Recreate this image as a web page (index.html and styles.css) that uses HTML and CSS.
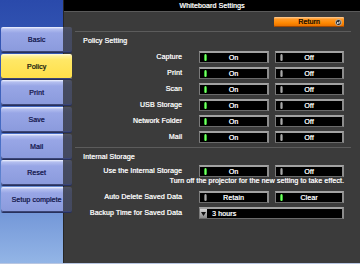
FILE: index.html
```html
<!DOCTYPE html>
<html lang="en">
<head>
    <meta charset="UTF-8">
    <title>Whiteboard Settings</title>
    <link rel="stylesheet" href="styles.css">
</head>
<body>
    <div class="screen">
        <nav class="tabs">
            <button class="tab">Basic</button>
            <button class="tab active">Policy</button>
            <button class="tab">Print</button>
            <button class="tab">Save</button>
            <button class="tab">Mail</button>
            <button class="tab">Reset</button>
            <button class="tab">Setup complete</button>
        </nav>

        <main class="panel">
            <header class="titlebar">Whiteboard Settings</header>

            <div class="toolbar">
                <button class="return-btn">
                    <span class="return-text">Return</span>
                    <svg class="return-icon" width="7" height="7" viewBox="0 0 7 7">
                        <circle cx="3.5" cy="3.5" r="3" fill="#2a2a2a" stroke="#cfcfcf" stroke-width="0.8"/>
                        <path d="M4.8 2.2 V4 H2.2 M3.2 3 L2.2 4 L3.2 5" fill="none" stroke="#fff" stroke-width="0.8"/>
                    </svg>
                </button>
            </div>

            <hr class="sep">
            <h2 class="group-title">Policy Setting</h2>
            <div class="rows">
                <div class="row">
                    <span class="label">Capture</span>
                    <span class="toggle"><i class="led on"></i><span>On</span></span>
                    <span class="toggle"><i class="led"></i><span>Off</span></span>
                </div>
                <div class="row">
                    <span class="label">Print</span>
                    <span class="toggle"><i class="led on"></i><span>On</span></span>
                    <span class="toggle"><i class="led"></i><span>Off</span></span>
                </div>
                <div class="row">
                    <span class="label">Scan</span>
                    <span class="toggle"><i class="led on"></i><span>On</span></span>
                    <span class="toggle"><i class="led"></i><span>Off</span></span>
                </div>
                <div class="row">
                    <span class="label">USB Storage</span>
                    <span class="toggle"><i class="led on"></i><span>On</span></span>
                    <span class="toggle"><i class="led"></i><span>Off</span></span>
                </div>
                <div class="row">
                    <span class="label">Network Folder</span>
                    <span class="toggle"><i class="led on"></i><span>On</span></span>
                    <span class="toggle"><i class="led"></i><span>Off</span></span>
                </div>
                <div class="row">
                    <span class="label">Mail</span>
                    <span class="toggle"><i class="led on"></i><span>On</span></span>
                    <span class="toggle"><i class="led"></i><span>Off</span></span>
                </div>
            </div>

            <hr class="sep">
            <h2 class="group-title">Internal Storage</h2>
            <div class="row first">
                <span class="label">Use the Internal Storage</span>
                <span class="toggle"><i class="led on"></i><span>On</span></span>
                <span class="toggle"><i class="led"></i><span>Off</span></span>
            </div>
            <p class="note">Turn off the projector for the new setting to take effect.</p>
            <div class="rows storage">
                <div class="row">
                    <span class="label">Auto Delete Saved Data</span>
                    <span class="toggle"><i class="led"></i><span>Retain</span></span>
                    <span class="toggle"><i class="led on"></i><span>Clear</span></span>
                </div>
                <div class="row">
                    <span class="label">Backup Time for Saved Data</span>
                    <span class="select">
                        <span class="select-arrow">
                            <svg width="5" height="4" viewBox="0 0 5 4"><path d="M0 0 H5 L2.5 4 Z" fill="#111"/></svg>
                        </span>
                        <span class="select-value">3 hours</span>
                    </span>
                </div>
            </div>
        </main>
    </div>
</body>
</html>
```

FILE: styles.css
```css
* {
    box-sizing: border-box;
}

body {
    margin: 0;
    width: 360px;
    height: 264px;
    overflow: hidden;
    font-family: "Liberation Sans", Arial, sans-serif;
    font-size: 7px;
    letter-spacing: 0.12px;
}

.screen {
    display: flex;
    height: 264px;
    background: linear-gradient(#2a4aab, #4a70c6 55%, #93b5e6);
    border-bottom: 1px solid #b8c6e2;
}

/* left menu */
.tabs {
    width: 63px;
    flex: none;
    display: flex;
    flex-direction: column;
    gap: 1.67px;
    padding: 27px 0 0 1px;
}

.tab {
    position: relative;
    z-index: 1;
    width: 71px;
    height: 25px;
    flex: none;
    border: 0;
    border-radius: 2px;
    padding: 0;
    font: 7px "Liberation Sans", Arial, sans-serif;
    letter-spacing: 0.1px;
    text-shadow: 0.35px 0 0 #1b2255;
    color: #1b2255;
    text-align: center;
    background:
        linear-gradient(to right, transparent 62px, rgba(58, 62, 78, 0.88) 62px),
        linear-gradient(#f4f6ff, #b4bff0 2px, #98a6e6 6px, #8a9adc);
    box-shadow: inset 0 -1px 0 #3c4676, 0 1px 0 #27305c;
}

.tab.active {
    background: linear-gradient(#fffbe0, #fff09a 2px, #ffe866 6px, #ffdf48);
    color: #2b2a14;
    text-shadow: 0.35px 0 0 #2b2a14;
}

/* right panel */
.panel {
    flex: 1;
    display: flex;
    flex-direction: column;
    background: #3b3b3b;
    border-left: 1px solid #262626;
    color: #f2f2f2;
    text-shadow: 0.35px 0 0 #f2f2f2;
}

.titlebar {
    height: 12px;
    line-height: 11px;
    background: #000;
    border-bottom: 1px solid #5a5a5a;
    text-align: center;
}

.toolbar {
    display: flex;
    justify-content: flex-end;
    padding: 5px 16px 0 0;
}

.return-btn {
    width: 70px;
    height: 10px;
    display: grid;
    grid-template-columns: 9px 1fr 9px;
    align-items: center;
    padding: 0;
    border: 0;
    border-radius: 1px;
    background: linear-gradient(#ffd2a0, #ff9a2a 2px, #ff8800 60%, #e06a00);
    box-shadow: inset 0 -1px 0 #a04800;
    font: 7px "Liberation Sans", Arial, sans-serif;
    letter-spacing: 0.12px;
    color: #1a0e00;
    text-shadow: 0.35px 0 0 #1a0e00;
}

.return-text {
    grid-column: 2;
    line-height: 10px;
}

.return-icon {
    grid-column: 3;
    display: block;
}

.sep {
    margin: 4px 9px 0 11px;
    border: 0;
    border-top: 1px solid #5c5c5c;
    height: 0;
}

.group-title {
    margin: 5px 0 0 19px;
    font-size: 7px;
    font-weight: normal;
    line-height: 8px;
}

.rows {
    display: flex;
    flex-direction: column;
    gap: 4px;
    margin-top: 6px;
}

.rows.storage {
    margin-top: 6px;
}

.row {
    display: grid;
    grid-template-columns: 1fr 70px 69px;
    column-gap: 6px;
    height: 12px;
    padding-right: 16px;
    align-items: center;
}

.row.first {
    margin-top: 4px;
}

.label {
    text-align: right;
    padding-right: 11px;
    line-height: 12px;
}

.toggle {
    height: 12px;
    display: grid;
    grid-template-columns: 7px 1fr 7px;
    align-items: center;
    background: #000;
    border-style: solid;
    border-width: 2px 2px 1px 1px;
    border-color: #a2a2a2 #8c8c8c #6a6a6a #7a7a7a;
    line-height: 9px;
    text-align: center;
}

.led {
    justify-self: end;
    width: 3px;
    height: 7px;
    border-radius: 1.5px;
    background: linear-gradient(to right, #4c4c4c, #a8a8a8, #4c4c4c);
}

.led.on {
    background: linear-gradient(to right, #129a12, #7cff6a, #129a12);
}

.note {
    margin: 0;
    padding-right: 16px;
    text-align: right;
    line-height: 8px;
}

.select {
    grid-column: 2 / 4;
    height: 12px;
    display: flex;
    align-items: stretch;
    background: #000;
    border-style: solid;
    border-width: 2px 2px 1px 1px;
    border-color: #a2a2a2 #8c8c8c #6a6a6a #7a7a7a;
}

.select-arrow {
    width: 7px;
    display: flex;
    align-items: center;
    justify-content: center;
    background: linear-gradient(#d4d4d4, #8a8a8a);
}

.select-value {
    padding-left: 5px;
    line-height: 9px;
}
```
